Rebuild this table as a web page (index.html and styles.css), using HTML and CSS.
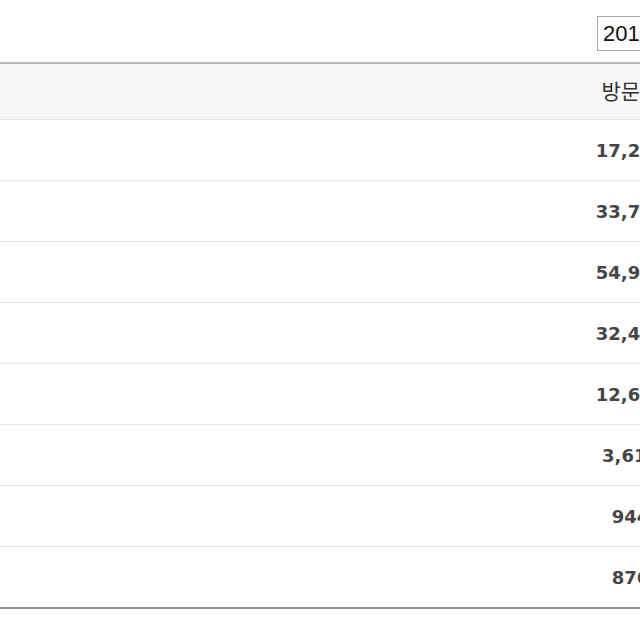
FILE: index.html
```html
<!DOCTYPE html>
<html lang="ko">
<head>
<meta charset="utf-8">
<title>방문 통계</title>
<link rel="stylesheet" href="styles.css">
</head>
<body>
<div class="page">
  <div class="toolbar">
    <select class="year-select">
      <option>2016</option>
    </select>
  </div>
  <table class="stats">
    <thead>
      <tr><th class="label"></th><th class="value">방문수</th></tr>
    </thead>
    <tbody>
      <tr><td class="label"></td><td class="value">17,234</td></tr>
      <tr><td class="label"></td><td class="value">33,712</td></tr>
      <tr><td class="label"></td><td class="value">54,901</td></tr>
      <tr><td class="label"></td><td class="value">32,456</td></tr>
      <tr><td class="label"></td><td class="value">12,678</td></tr>
      <tr><td class="label"></td><td class="value">3,612</td></tr>
      <tr><td class="label"></td><td class="value">944</td></tr>
      <tr><td class="label"></td><td class="value">876</td></tr>
    </tbody>
  </table>
</div>
</body>
</html>
```
FILE: styles.css
```css
html, body {
  margin: 0;
  padding: 0;
  background: #fff;
  overflow: hidden;
}
.page {
  width: 710px;
  font-family: "Liberation Sans", Arial, "Noto Sans CJK KR", sans-serif;
}
.toolbar {
  display: flex;
  justify-content: flex-end;
  padding-top: 16px;
  height: 62px;
  box-sizing: border-box;
}
.year-select {
  width: 113px;
  height: 35px;
  margin: 0;
  padding: 0 0 0 5px;
  border: 1px solid #a9a9a9;
  border-radius: 0;
  background: #fff;
  font-family: "Liberation Sans", Arial, sans-serif;
  font-size: 22px;
  color: #111;
  appearance: none;
  -webkit-appearance: none;
}
.stats {
  width: 100%;
  border-collapse: collapse;
  table-layout: fixed;
  border-top: 2px solid #b8b8b8;
  border-bottom: 2px solid #8c8c8c;
}
.stats th {
  height: 51px;
  padding: 0 0 4px;
  background: #f7f7f7;
  border-bottom: 1px solid #e4e4e4;
  font-weight: normal;
  font-size: 21px;
  color: #333;
  font-family: "Noto Sans CJK KR", "Liberation Sans", sans-serif;
}
.stats td {
  height: 60px;
  padding: 0;
  border-bottom: 1px solid #e8e8e8;
  font-family: "DejaVu Sans", Verdana, sans-serif;
  font-size: 18px;
  font-weight: bold;
  color: #454545;
}
.stats tbody tr:last-child td {
  border-bottom: none;
}
.label {
  width: 551px;
}
.value {
  text-align: center;
}
```
